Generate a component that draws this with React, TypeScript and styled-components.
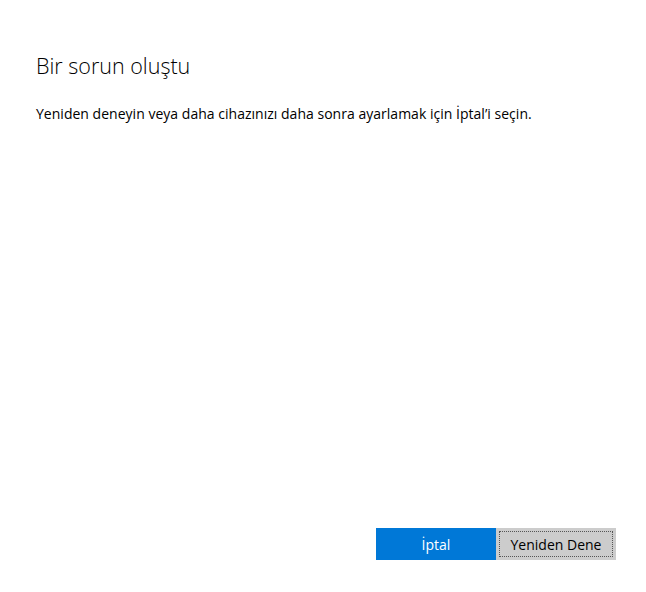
import styled, { createGlobalStyle } from 'styled-components';

const GlobalStyle = createGlobalStyle`
  html, body {
    margin: 0;
    padding: 0;
    background: #ffffff;
  }
  body {
    font-family: "Open Sans", "Noto Sans", sans-serif;
    color: #000000;
  }
`;

const Page = styled.div`
  height: 100vh;
  box-sizing: border-box;
  display: flex;
  flex-direction: column;
  padding: 50px 30px 32px 36px;
`;

const Title = styled.h1`
  margin: 0;
  font-size: 21.5px;
  font-weight: 300;
  line-height: 32px;
  color: #000000;
`;

const Message = styled.p`
  margin: 22px 0 0;
  font-size: 14px;
  letter-spacing: 0.02px;
  line-height: 20px;
`;

const Footer = styled.div`
  margin-top: auto;
  display: flex;
  justify-content: flex-end;
`;

const Button = styled.button<{ $primary?: boolean; $focused?: boolean }>`
  width: 120px;
  height: 32px;
  border: none;
  padding: 0;
  font-family: "Open Sans", "Noto Sans", sans-serif;
  font-size: 14px;
  background: ${(p) => (p.$primary ? '#0078d7' : '#cccccc')};
  color: ${(p) => (p.$primary ? '#ffffff' : '#000000')};
  outline: ${(p) => (p.$focused ? '1px dotted #555555' : 'none')};
  outline-offset: -4px;
  cursor: pointer;
`;

export default function App() {
  return (
    <>
      <GlobalStyle />
      <Page>
        <Title>Bir sorun oluştu</Title>
        <Message>
          Yeniden deneyin veya daha cihazınızı daha sonra ayarlamak için İptal’i seçin.
        </Message>
        <Footer>
          <Button $primary>İptal</Button>
          <Button $focused>Yeniden Dene</Button>
        </Footer>
      </Page>
    </>
  );
}
